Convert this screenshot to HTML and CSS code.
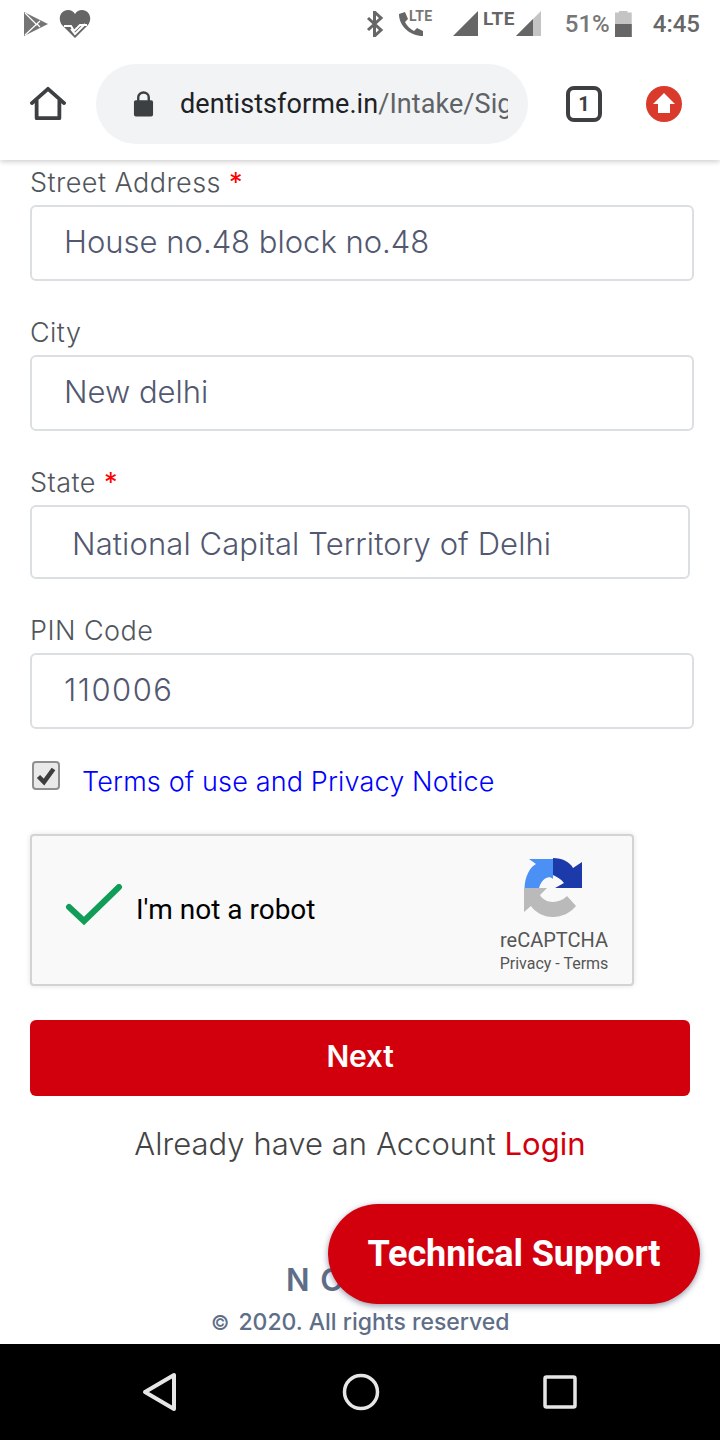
FILE: index.html
```html
<!DOCTYPE html>
<html lang="en">
<head>
<meta charset="utf-8">
<title>Sign up</title>
<link rel="stylesheet" href="styles.css">
</head>
<body>
<div class="phone">
  <header class="status">
    <div class="status-left">
      <svg class="ic-play" viewBox="0 0 24 24" width="24" height="24"><path fill="#757575" d="M0 0 L24 12 L0 24Z"/><path stroke="#fff" stroke-width="1.200" fill="none" d="M1 1 L13 13 M1 23 L16 9 M16 15 L13 12"/></svg>
      <svg class="ic-heart" viewBox="0 0 32 28" width="32" height="28"><path fill="#666" d="M16 28 L3 15 C-2 8 2 0 9 0 C12 0 14.500 1.500 16 4 C17.500 1.500 20 0 23 0 C30 0 34 8 29 15Z"/><path fill="none" stroke="#fff" stroke-width="2" d="M5 16 H12 L15 21 L21 15 H28"/><path fill="none" stroke="#fff" stroke-width="2" d="M12 19 L16 24 L26 14"/></svg>
    </div>
    <div class="status-right">
      <svg class="ic-bt" viewBox="0 0 18 26" width="18" height="26"><path fill="none" stroke="#666" stroke-width="3" d="M2 7 L15 19 L8.500 25 V1 L15 7 L2 19"/></svg>
      <div class="call">
        <svg viewBox="0 0 26 26" width="26" height="26"><path fill="#666" d="M1 3 L7 1 L10 8 L7 11 C9 15 12 18 16 20 L19 17 L25 20 V25 C12 25 1 15 1 3Z"/></svg>
        <span class="call-lte">LTE</span>
      </div>
      <svg class="ic-sig" viewBox="0 0 26 26" width="26" height="26"><path fill="#666" d="M0 25 L25 0 V25Z"/></svg>
      <span class="sig-lte">LTE</span>
      <svg class="ic-sig2" viewBox="0 0 26 26" width="26" height="26"><path fill="#c4c4c4" d="M0 25 L25 0 V25Z"/><path fill="#666" d="M0 25 L17 8 V25Z"/></svg>
      <span class="batt-text">51%</span>
      <div class="batt"><div class="batt-fill"></div></div>
      <span class="clock">4:45</span>
    </div>
  </header>

  <nav class="toolbar">
    <svg class="ic-home" viewBox="0 0 38 36" width="36" height="36"><path fill="none" stroke="#3c4043" stroke-width="4" stroke-linejoin="round" stroke-linecap="round" d="M2 17 L19 2 L36 17 M7 14 V33 H31 V14"/></svg>
    <div class="omnibox">
      <svg class="ic-lock" viewBox="0 0 22 26" width="21" height="26"><path fill="#3c4043" d="M3 9 H19 Q21 9 21 11 V24 Q21 26 19 26 H3 Q1 26 1 24 V11 Q1 9 3 9Z"/><path fill="none" stroke="#3c4043" stroke-width="2.500" d="M5.500 10 V6 A5.500 5 0 0 1 16.500 6 V10"/></svg>
      <div class="url"><span class="url-host">dentistsforme.in</span><span class="url-path">/Intake/Sig</span></div>
    </div>
    <div class="tabs">1</div>
    <svg class="ic-update" viewBox="0 0 36 36" width="36" height="36"><circle cx="18" cy="18" r="18" fill="#d93a2b"/><path fill="#fff" d="M18 7 L29 18 H24 V27 H12 V18 H7Z"/></svg>
  </nav>

  <main class="page">
    <div class="field"><label class="label">Street Address <span class="req">*</span></label><div class="input">House no.48 block no.48</div></div>
    <div class="field"><label class="label">City</label><div class="input">New delhi</div></div>
    <div class="field"><label class="label">State <span class="req">*</span></label><div class="input select">National Capital Territory of Delhi</div></div>
    <div class="field"><label class="label">PIN Code</label><div class="input digits">110006</div></div>

    <div class="terms">
      <span class="checkbox"><svg viewBox="0 0 20 20" width="20" height="20"><path fill="none" stroke="#3d3d3d" stroke-width="4.500" d="M2.500 10.500 L8 16 L17.500 3"/></svg></span>
      <a class="terms-link" href="#">Terms of use and Privacy Notice</a>
    </div>

    <div class="captcha">
      <svg class="captcha-check" viewBox="0 0 58 44" width="58" height="44"><path fill="none" stroke="#0f9d58" stroke-width="6" stroke-linecap="round" d="M4 23 L19 37 L54 3"/></svg>
      <span class="captcha-text">I'm not a robot</span>
      <div class="captcha-brand">
        <svg class="captcha-logo" viewBox="0 0 60 60" width="60" height="60">
          <path fill="#bababa" d="M0 30 H23 L16 37 C20 45 34 47 43 38 L52 48 C46 55 38 59 29 59 C19 59 11 54 7 48 L0 54Z"/>
          <path fill="#4a90f5" d="M0.500 30 C1 18 6 9 12 6 L5 1 H29 V21 C25 17 18 20 15 30Z"/>
          <path fill="#1c3aa9" d="M29 0 C38 0 46 4 49 10 L58 4 V30 H31 L40 25 C37 21 33 19 29 17Z"/>
        </svg>
        <span class="captcha-name">reCAPTCHA</span>
        <span class="captcha-links">Privacy - Terms</span>
      </div>
    </div>

    <button class="next" type="button">Next</button>
    <p class="account">Already have an Account <a class="login" href="#">Login</a></p>

    <footer class="foot">
      <div class="foot-brand">N O</div>
      <div class="foot-copy"><span class="copy-mark">©</span> 2020. All rights reserved</div>
    </footer>
    <button class="support" type="button">Technical Support</button>
  </main>

  <div class="navbar">
    <svg viewBox="0 0 36 40" width="36" height="40"><path fill="none" stroke="#e6e6e6" stroke-width="4" stroke-linejoin="round" d="M3 20 L32 3 V37Z"/></svg>
    <svg viewBox="0 0 38 38" width="38" height="38"><circle cx="19" cy="19" r="16.500" fill="none" stroke="#e6e6e6" stroke-width="3.500"/></svg>
    <svg viewBox="0 0 34 34" width="34" height="34"><rect x="2" y="2" width="30" height="30" rx="1.500" fill="none" stroke="#e6e6e6" stroke-width="3.500"/></svg>
  </div>
</div>
</body>
</html>
```
FILE: styles.css
```css
* { box-sizing: border-box; }
html, body { margin: 0; padding: 0; background: #fff; }
body { font-family: Inter, Roboto, "Liberation Sans", sans-serif; }
.phone { width: 720px; height: 1440px; display: flex; flex-direction: column; overflow: hidden; }

.status { height: 48px; display: flex; justify-content: space-between; align-items: center; padding: 0 20px 0 24px; color: #666; flex: none; position: relative; z-index: 3; background: #fff; font-family: Roboto, sans-serif; }
.status-left { display: flex; align-items: center; gap: 11px; }
.status-right { display: flex; align-items: center; }
.ic-bt { margin-right: 14px; }
.call { position: relative; width: 36px; height: 26px; margin-right: 19px; }
.call-lte { position: absolute; left: 11px; top: -3px; font-size: 14px; font-weight: 700; color: #777; letter-spacing: .3px; }
.sig-lte { font-size: 19px; font-weight: 700; color: #666; margin: -12px 2px 0 4px; letter-spacing: .4px; }
.ic-sig2 { margin-left: -1px; }
.batt-text { font-size: 24px; font-weight: 500; color: #777; margin-left: 23px; }
.batt { width: 17px; height: 26px; margin-left: 5px; background: #c4c4c4; display: flex; align-items: flex-end; clip-path: polygon(25% 0, 75% 0, 75% 6%, 100% 6%, 100% 100%, 0 100%, 0 6%, 25% 6%); }
.batt-fill { width: 100%; height: 13px; background: #666; }
.clock { font-size: 24px; font-weight: 500; color: #666; margin-left: 21px; }

.toolbar { height: 112px; flex: none; display: flex; align-items: center; padding: 0 38px 0 30px; position: relative; z-index: 2; background: #fff; box-shadow: 0 2px 5px rgba(0,0,0,.18); font-family: Roboto, sans-serif; }
.ic-home { flex: none; margin-top: -1px; }
.omnibox { width: 432px; height: 80px; margin-left: 30px; border-radius: 40px; background: #f1f3f4; display: flex; align-items: center; padding-left: 37px; flex: none; }
.ic-lock { flex: none; margin-top: -1px; }
.url { margin-left: 26px; width: 328px; overflow: hidden; white-space: nowrap; font-size: 27px; letter-spacing: .07px; line-height: 36px; }
.url-host { color: #202124; }
.url-path { color: #5f6368; }
.tabs { width: 36px; height: 36px; margin-left: 38px; border: 4px solid #3c4043; border-radius: 8px; color: #3c4043; font-size: 20px; font-weight: 700; display: flex; align-items: center; justify-content: center; flex: none; }
.ic-update { flex: none; margin-left: 44px; }

.page { flex: 1; position: relative; padding: 0 30px; overflow: hidden; color: #495057; }
.field { margin-bottom: 29px; }
.label { display: block; height: 45px; line-height: 46px; font-size: 27px; font-weight: 300; letter-spacing: .45px; color: #50565c; }
.req { color: #f00; font-weight: 400; }
.input { width: 664px; height: 76px; border: 2px solid #dcdfe2; border-radius: 6px; padding: 0 32px; line-height: 69px; font-size: 31px; font-weight: 300; color: #525870; }
.select { width: 660px; height: 74px; padding: 0 40px; line-height: 73px; letter-spacing: .1px; }
.digits { letter-spacing: 1.500px; }

.terms { display: flex; align-items: flex-start; margin-top: 32px; height: 36px; }
.checkbox { width: 28px; height: 29px; margin-left: 2px; border: 2px solid #8f8f8f; border-radius: 4px; background: #e9e9e9; display: flex; align-items: center; justify-content: center; flex: none; }
.terms-link { margin-left: 22px; color: #00f; font-size: 27px; font-weight: 300; letter-spacing: .15px; line-height: 41px; text-decoration: none; }

.captcha { width: 604px; height: 152px; margin-top: 37px; border: 2px solid #d3d3d3; border-radius: 4px; background: #f9f9f9; box-shadow: 0 0 4px 1px rgba(0,0,0,.08); display: flex; align-items: center; position: relative; font-family: Roboto, sans-serif; }
.captcha-check { flex: none; margin-left: 33px; margin-top: -9px; }
.captcha-text { margin-left: 13px; color: #000; font-size: 28px; margin-top: -1px; }
.captcha-brand { margin-left: auto; width: 120px; margin-right: 18px; display: flex; flex-direction: column; align-items: center; color: #555; margin-top: 13px; }
.captcha-logo { flex: none; margin-bottom: 9px; }
.captcha-name { font-size: 20px; line-height: 26px; }
.captcha-links { font-size: 16px; line-height: 22px; }

.next { display: block; width: 660px; height: 76px; margin-top: 34px; padding-bottom: 6px; border: 0; border-radius: 6px; background: #d2000d; color: #fff; font: 600 30px Inter, sans-serif; letter-spacing: -.2px; }
.account { margin: 29px 0 0; text-align: center; font-size: 31px; font-weight: 300; letter-spacing: .05px; line-height: 38px; color: #444; width: 660px; }
.login { color: #d2000d; text-decoration: none; font-weight: 400; }

.foot { margin-top: 97px; text-align: center; color: #5e6e88; width: 660px; }
.foot-brand { font-size: 31px; line-height: 40px; font-weight: 600; letter-spacing: 1.500px; text-align: left; margin-left: 256px; }
.foot-copy { margin-top: 7px; font-size: 23px; line-height: 30px; font-weight: 500; text-align: left; margin-left: 181px; }
.copy-mark { font-size: 20px; margin-right: 3px; }
.support { position: absolute; left: 328px; top: 1044px; width: 372px; height: 100px; border: 0; border-radius: 50px; background: #d2000d; color: #fff; font: 700 36px Roboto, sans-serif; letter-spacing: -.1px; box-shadow: 0 2px 6px rgba(60,70,100,.55); }

.navbar { height: 96px; flex: none; background: #000; display: flex; align-items: center; gap: 163.500px; padding-left: 142px; }
```
